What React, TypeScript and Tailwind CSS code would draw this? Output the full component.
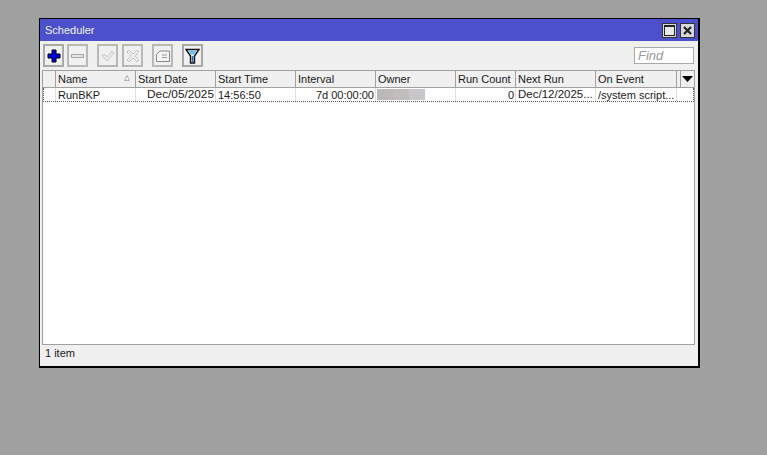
const FONT = "font-['Liberation_Sans',sans-serif]";

function Btn({ children, disabled }: { children: React.ReactNode; disabled?: boolean }) {
  return (
    <div className={`w-[21px] h-[23px] flex items-center justify-center bg-[#f0f0f0] border-2 ${disabled ? "border-[#b8b8b8]" : "border-[#a8a8a8]"}`}>
      {children}
    </div>
  );
}

const cols: { label: string; w: string; sort?: boolean }[] = [
  { label: "", w: "w-[13px]" },
  { label: "Name", w: "w-[80px]", sort: true },
  { label: "Start Date", w: "w-[80px]" },
  { label: "Start Time", w: "w-[80px]" },
  { label: "Interval", w: "w-[80px]" },
  { label: "Owner", w: "w-[80px]" },
  { label: "Run Count", w: "w-[60px]" },
  { label: "Next Run", w: "w-[80px]" },
  { label: "On Event", w: "w-[81px]" },
];

function Cell({ w, right, children }: { w: string; right?: boolean; children?: React.ReactNode }) {
  return (
    <div className={`${w} shrink-0 h-full flex items-center border-r border-[#e0e0e0] pl-[2px] pr-[1px] pt-[1px] overflow-hidden whitespace-nowrap ${right ? "justify-end" : ""}`}>
      {children}
    </div>
  );
}

export default function App() {
  return (
    <div className={`${FONT} w-[767px] h-[455px] bg-[#a0a0a0] pt-[18px] pl-[39px] text-[11px] leading-none text-[#1a1a1a] overflow-hidden`}>
      <div className="w-[661px] h-[350px] border-t border-l border-black border-r-2 border-b-2 flex flex-col bg-[#f0f0f0]">
        {/* Title bar */}
        <div className="h-[22px] shrink-0 bg-[#4c50cc] flex items-center justify-between pl-[5px] pr-[3px] text-[#f0f0f0]">
          <span>Scheduler</span>
          <div className="flex gap-[3px] items-center">
            <div className="w-[15px] h-[15px] bg-[#d8d8d8] flex items-center justify-center border border-[#333]">
              <div className="w-[11px] h-[11px] bg-[#e8e8e8] border border-[#222] border-t-2" />
            </div>
            <div className="w-[15px] h-[15px] bg-[#d8d8d8] flex items-center justify-center border border-[#333]">
              <svg width="9" height="9" viewBox="0 0 9 9"><path d="M1 1 L8 8 M8 1 L1 8" stroke="#222" strokeWidth="2.200" /></svg>
            </div>
          </div>
        </div>
        {/* Toolbar */}
        <div className="h-[29px] shrink-0 flex items-start pt-[3px] pl-[3px] pr-[4px] bg-[#f0f0f0]">
          <Btn>
            <svg width="14" height="14" viewBox="0 0 14 14">
              <path d="M5 1h4v4h4v4H9v4H5V9H1V5h4z" fill="#0000e0" stroke="#000" strokeWidth="1" />
            </svg>
          </Btn>
          <div className="w-[3px]" />
          <Btn disabled>
            <div className="w-[13px] h-[4px] border border-[#a8a8a8] bg-[#e4e4e4]" />
          </Btn>
          <div className="w-[9px]" />
          <Btn disabled>
            <svg width="14" height="12" viewBox="0 0 14 12">
              <path d="M1 6l2-2 3 3 5-6 2 2-7 8z" fill="#ececec" stroke="#b0b0b0" strokeDasharray="1.5 0.7" />
            </svg>
          </Btn>
          <div className="w-[4px]" />
          <Btn disabled>
            <svg width="14" height="14" viewBox="0 0 14 14">
              <path d="M1 3l2-2 4 4 4-4 2 2-4 4 4 4-2 2-4-4-4 4-2-2 4-4z" fill="#ececec" stroke="#b0b0b0" strokeDasharray="1.5 0.7" />
            </svg>
          </Btn>
          <div className="w-[9px]" />
          <Btn disabled>
            <svg width="14" height="12" viewBox="0 0 14 12">
              <path d="M0.5 11.500V4.500L4 1H13.500V11.500Z" fill="#f4f4f4" stroke="#888" />
              <path d="M6 5h5M6 7.500h5" stroke="#999" />
            </svg>
          </Btn>
          <div className="w-[9px]" />
          <Btn>
            <svg width="15" height="16" viewBox="0 0 15 16">
              <path d="M1 1.500h13L9.500 8v7h-4V8z" fill="#dff0f9" stroke="#111" strokeWidth="1.400" />
              <path d="M3.500 3h8L9 6.500H6z" fill="#6cc0ec" />
              <path d="M6.800 8h1.600v6H6.800z" fill="#2f66a8" />
            </svg>
          </Btn>
          <div className="ml-auto mt-[3px] w-[60px] h-[17px] bg-white border border-[#a8a8a8] pl-[3px] flex items-center italic text-[#9a9a9a] text-[13px]">
            Find
          </div>
        </div>
        {/* Table */}
        <div className="ml-[2px] mr-[3px] h-[275px] shrink-0 border border-[#a0a0a0] bg-white flex flex-col overflow-hidden">
          <div className="h-[17px] shrink-0 flex items-center bg-[#f0f0f0] border-b border-[#a0a0a0]">
            {cols.map((c) => (
              <div key={c.label} className={`${c.w} shrink-0 h-full relative flex items-center pl-[2px] pt-[1px] border-r border-[#a0a0a0] whitespace-nowrap`}>
                {c.label}
                {c.sort && (
                  <svg className="absolute right-[5px] top-[4px]" width="6" height="6" viewBox="0 0 6 6">
                    <path d="M3 .5L5.500 5.500H.5z" fill="#f4f4f4" stroke="#b0b0b0" />
                  </svg>
                )}
              </div>
            ))}
            <div className="w-[3px]" />
            <div className="flex-1 h-full flex items-center justify-center border-l border-[#a0a0a0]">
              <svg width="11" height="6" viewBox="0 0 11 6"><path d="M0 0h11L5.500 6z" fill="#000" /></svg>
            </div>
          </div>
          <div className="h-[14px] shrink-0 flex items-center border-b border-dotted border-[#555] border-x">
            <Cell w="w-[12px]" />
            <Cell w="w-[80px]">RunBKP</Cell>
            <Cell w="w-[80px]" right><span className="text-[11.800px]">Dec/05/2025</span></Cell>
            <Cell w="w-[80px]">14:56:50</Cell>
            <Cell w="w-[80px]" right>7d 00:00:00</Cell>
            <Cell w="w-[80px]">
              <div className="w-[48px] h-[11px] flex -ml-[1px] -mt-[1px]">
                <div className="flex-1 bg-[#bdb8b8]" />
                <div className="flex-1 bg-[#c1bdbd]" />
                <div className="flex-1 bg-[#c7c7cb]" />
              </div>
            </Cell>
            <Cell w="w-[60px]" right>0</Cell>
            <Cell w="w-[80px]"><span className="text-[11.500px]">Dec/12/2025...</span></Cell>
            <Cell w="w-[81px]">/system script...</Cell>
          </div>
        </div>
        {/* Status */}
        <div className="flex-1 flex items-center pl-[5px] pb-[4px] bg-[#f0f0f0]">1 item</div>
      </div>
    </div>
  );
}
